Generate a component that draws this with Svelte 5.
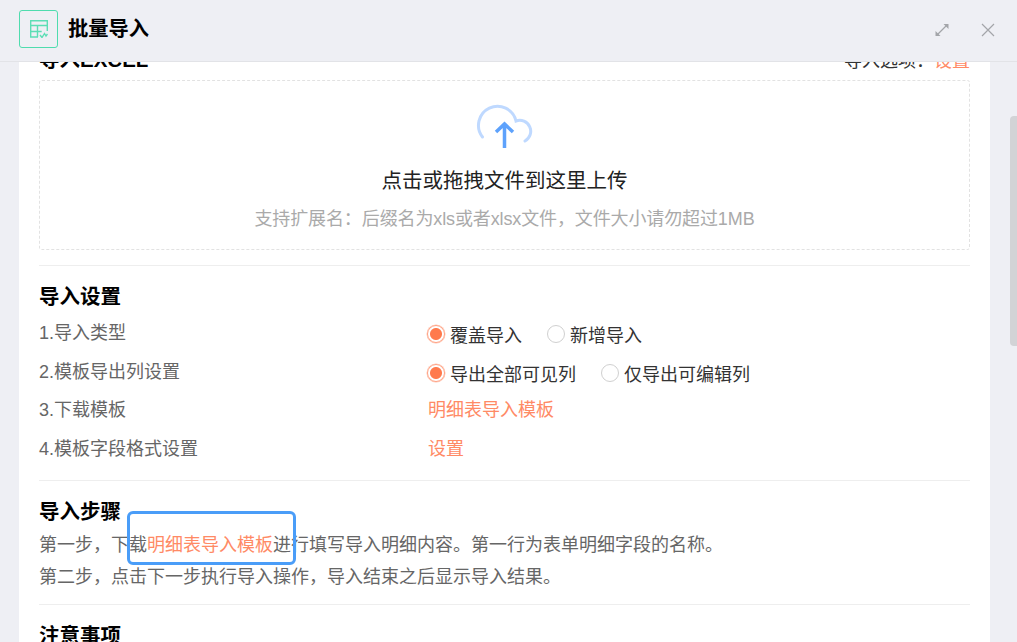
<script>
    const settings = [
        { label: "1.导入类型", options: ["覆盖导入", "新增导入"] },
        { label: "2.模板导出列设置", options: ["导出全部可见列", "仅导出可编辑列"] },
        { label: "3.下载模板", link: "明细表导入模板" },
        { label: "4.模板字段格式设置", link: "设置" }
    ];
</script>

<div class="page">
    <header class="header">
        <div class="logo">
            <svg width="18" height="18" viewBox="0 0 18 18" fill="none" stroke="#5cdeb5" stroke-width="1.400">
                <path d="M8 17H.7V.7h16.600V11" />
                <path d="M.7 5.500h16.600M.7 11.500h11M7.500 5.500V17" />
                <path d="M10 15l2 2.500 2.500-4 1.500 2.500 1.500-2" />
            </svg>
        </div>
        <h1 class="title">批量导入</h1>
        <div class="actions">
            <svg width="16" height="16" viewBox="0 0 16 16" fill="none" stroke="#a3a5a9" stroke-width="1.200">
                <path d="M3 13L13 3" />
                <path d="M9.500 2h5v5L9.500 2z" fill="#a3a5a9" stroke="none" />
                <path d="M6.500 14h-5V9l5 5z" fill="#a3a5a9" stroke="none" />
            </svg>
            <svg width="16" height="16" viewBox="0 0 16 16" fill="none" stroke="#a3a5a9" stroke-width="1.200">
                <path d="M2 2l12 12M14 2L2 14" />
            </svg>
        </div>
    </header>

    <div class="body">
        <main class="card">
            <div class="top">
                <h2>导入EXCEL</h2>
                <div class="options">导入选项：<span class="orange">设置</span></div>
            </div>

            <div class="upload">
                <svg width="60" height="46" viewBox="-1.500 0 60 46" fill="none">
                    <path d="M6 33A19 19 0 1 1 39.500 17A11 11 0 0 1 48.500 37" stroke="#bfd9ff" stroke-width="3" stroke-linecap="round" />
                    <path d="M28 44V20M19.500 28L28 20L36.500 28" stroke="#5ea2fc" stroke-width="3.500" />
                </svg>
                <div class="upload-text">点击或拖拽文件到这里上传</div>
                <div class="upload-hint">支持扩展名：后缀名为xls或者xlsx文件，文件大小请勿超过1MB</div>
            </div>

            <section class="section">
                <h2>导入设置</h2>
                <div class="rows">
                    {#each settings as row}
                        <div class="row">
                            <div class="label">{row.label}</div>
                            {#if row.options}
                                <div class="radios">
                                    {#each row.options as opt, i}
                                        <span class="radio" class:on={i === 0}>{opt}</span>
                                    {/each}
                                </div>
                            {:else}
                                <div class="orange">{row.link}</div>
                            {/if}
                        </div>
                    {/each}
                </div>
            </section>

            <section class="section">
                <h2>导入步骤</h2>
                <div class="steps">
                    <p>第一步，下载<span class="mark"><span class="orange">明细表导入模板</span></span>进行填写导入明细内容。第一行为表单明细字段的名称。</p>
                    <p>第二步，点击下一步执行导入操作，导入结束之后显示导入结果。</p>
                </div>
            </section>

            <section class="section">
                <h2>注意事项</h2>
            </section>
        </main>
        <div class="track"><div class="thumb"></div></div>
    </div>
</div>

<style>
    :global(body) {
        margin: 0;
        background: #eeeff4;
    }

    .page {
        width: 1017px;
        height: 642px;
        display: flex;
        flex-direction: column;
        overflow: hidden;
        font-family: "Liberation Sans", "Noto Sans CJK SC", sans-serif;
        font-size: 18px;
        color: #666;
    }

    .header {
        flex: none;
        display: flex;
        align-items: center;
        padding: 0 19px 4px;
        height: 57px;
        border-bottom: 1px solid #e2e3e7;
        background: #eeeff4;
        position: relative;
        z-index: 1;
    }

    .logo {
        width: 39px;
        height: 38px;
        box-sizing: border-box;
        border: 1px solid #4fdcae;
        border-radius: 3px;
        display: flex;
        align-items: center;
        justify-content: center;
    }

    .title {
        margin: 0 0 3px 10px;
        font-size: 20.300px;
        font-weight: 700;
        color: #000;
    }

    .actions {
        margin: 3px 2px 0 auto;
        display: flex;
        gap: 30px;
    }

    .body {
        flex: 1;
        display: flex;
        min-height: 0;
        overflow: hidden;
    }

    .card {
        width: 971px;
        margin-left: 19px;
        box-sizing: border-box;
        padding: 0 20px;
        background: #fff;
    }

    .top {
        margin-top: -17px;
        height: 35px;
        display: flex;
        justify-content: space-between;
    }

    h2 {
        margin: 0;
        font-size: 20.500px;
        line-height: 30px;
        font-weight: 700;
        color: #000;
    }

    .options {
        margin-top: 1px;
        color: #333;
        line-height: 30px;
    }

    .orange {
        color: #ff8a65;
    }

    .upload {
        height: 170px;
        margin-bottom: 15px;
        box-sizing: border-box;
        padding-top: 23px;
        border: 1px dashed #e2e2e2;
        border-radius: 3px;
        display: flex;
        flex-direction: column;
        align-items: center;
    }

    .upload-text {
        margin-top: 16px;
        font-size: 20.500px;
        line-height: 30px;
        color: #222;
    }

    .upload-hint {
        margin-top: 8px;
        line-height: 30px;
        letter-spacing: -0.120px;
        color: #aaa;
    }

    .section {
        margin-top: 13px;
        padding-top: 16px;
        border-top: 1px solid #eeeeee;
    }

    .rows {
        padding-bottom: 1px;
    }

    .row {
        height: 38.500px;
        display: flex;
        align-items: center;
    }

    .label {
        width: 389px;
        flex: none;
    }

    .radios {
        margin: 6px 0 0 -1px;
        display: flex;
        gap: 25px;
        color: #333;
    }

    .radio {
        display: flex;
        align-items: center;
        gap: 5px;
    }

    .radio::before {
        content: "";
        width: 18px;
        height: 18px;
        box-sizing: border-box;
        border: 1.500px solid #d0d0d0;
        border-radius: 50%;
    }

    .radio.on::before {
        border: 1px solid #ff9f80;
        background: radial-gradient(circle, #ff7a4d 0 5.500px, #fff 6.500px);
        box-shadow: 0 0 0 0.500px #ffc4b0;
    }

    .steps {
        margin: 3px 0 -2px;
    }

    p {
        margin: 0;
        line-height: 31.500px;
    }

    .mark {
        position: relative;
    }

    .mark::after {
        content: "";
        position: absolute;
        left: -20px;
        right: -23px;
        top: -24px;
        height: 54px;
        box-sizing: border-box;
        border: 3px solid #4a9df8;
        border-radius: 6px;
    }

    .track {
        width: 27px;
        flex: none;
        position: relative;
    }

    .thumb {
        position: absolute;
        right: 0;
        top: 54px;
        width: 7px;
        height: 230px;
        border-radius: 4px 0 0 4px;
        background: #d2d3d6;
    }
</style>
